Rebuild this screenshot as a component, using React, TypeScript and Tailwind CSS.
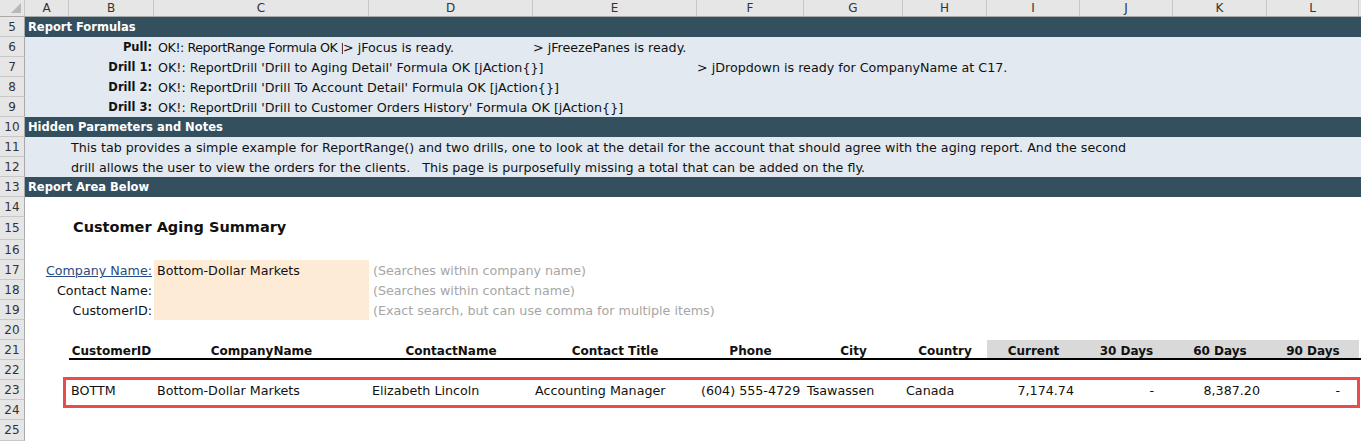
import type { ReactNode } from "react";

// column widths, A..L (row header is 25px)
const colA = "w-[44px]";
const colB = "w-[85px]";
const colC = "w-[215px]";
const colD = "w-[164px]";
const colE = "w-[164px]";
const colF = "w-[107px]";
const colG = "w-[99px]";
const colH = "w-[84px]";
const colI = "w-[93px]";
const colJ = "w-[93px]";
const colK = "w-[94px]";
const colL = "w-[92px]";

const letters: [string, string][] = [
  ["A", colA],
  ["B", colB],
  ["C", colC],
  ["D", colD],
  ["E", colE],
  ["F", colF],
  ["G", colG],
  ["H", colH],
  ["I", colI],
  ["J", colJ],
  ["K", colK],
  ["L", colL],
];

function Row({
  n,
  className = "",
  height = "h-5",
  children,
}: {
  n: number;
  className?: string;
  height?: string;
  children?: ReactNode;
}) {
  return (
    <div className={`flex ${height}`}>
      <div className="w-[25px] shrink-0 flex items-center justify-center bg-[#e6e6e6] border-b border-r border-b-[#c8c8c8] border-r-[#a9a9a9] text-[12px] text-[#333]">
        {n}
      </div>
      <div className={`flex flex-1 min-w-0 ${className}`}>{children}</div>
    </div>
  );
}

function Cell({ w, className = "", children }: { w: string; className?: string; children?: ReactNode }) {
  return <div className={`${w} shrink-0 flex items-center pt-[2px] whitespace-nowrap ${className}`}>{children}</div>;
}

function Band({ n, title }: { n: number; title: string }) {
  return (
    <Row n={n} className="bg-[#34505e] items-center pl-[3px] pt-[2px]">
      <span className="font-bold text-[11.5px] text-white">{title}</span>
    </Row>
  );
}

function DrillRow({ n, label, text }: { n: number; label: string; text: string }) {
  return (
    <Row n={n} className="bg-[#e2e9f0]">
      <Cell w={colA} />
      <Cell w={colB} className="justify-end pr-[2px] font-bold text-[11.5px]">
        {label}
      </Cell>
      <Cell w="w-auto" className="pl-[4px]">
        {text}
      </Cell>
    </Row>
  );
}

export default function App() {
  return (
    <div className="relative w-[1361px] h-[441px] overflow-hidden bg-white font-['DejaVu_Sans',sans-serif] text-[12.7px] text-[#111]">
      {/* column letters */}
      <div className="flex h-[17px] bg-[#e6e6e6] border-b border-[#a9a9a9]">
        <div className="w-[25px] shrink-0 relative border-r border-[#c8c8c8]">
          <div className="absolute right-[3px] bottom-[3px] w-0 h-0 border-r-[10px] border-t-[10px] border-r-[#b8b8b8] border-t-transparent" />
        </div>
        {letters.map(([l, w]) => (
          <div key={l} className={`${w} shrink-0 flex items-center justify-center border-r border-[#c8c8c8] text-[12px] text-[#333]`}>
            {l}
          </div>
        ))}
      </div>

      <Band n={5} title="Report Formulas" />

      <Row n={6} className="bg-[#e2e9f0]">
        <Cell w={colA} />
        <Cell w={colB} className="justify-end pr-[2px] font-bold text-[11.5px]">
          Pull:
        </Cell>
        <Cell w="w-[189px]" className="pl-[4px] overflow-hidden tracking-[-0.45px]">
          OK!: ReportRange Formula OK [jA
        </Cell>
        <Cell w="w-[190px]">&gt; jFocus is ready.</Cell>
        <Cell w="w-auto">&gt; jFreezePanes is ready.</Cell>
      </Row>
      <Row n={7} className="bg-[#e2e9f0]">
        <Cell w={colA} />
        <Cell w={colB} className="justify-end pr-[2px] font-bold text-[11.5px]">
          Drill 1:
        </Cell>
        <Cell w="w-[543px]" className="pl-[4px]">
          OK!: ReportDrill 'Drill to Aging Detail' Formula OK [jAction{"{}"}]
        </Cell>
        <Cell w="w-auto">&gt; jDropdown is ready for CompanyName at C17.</Cell>
      </Row>
      <DrillRow n={8} label="Drill 2:" text="OK!: ReportDrill 'Drill To Account Detail' Formula OK [jAction{}]" />
      <DrillRow n={9} label="Drill 3:" text="OK!: ReportDrill 'Drill to Customer Orders History' Formula OK [jAction{}]" />

      <Band n={10} title="Hidden Parameters and Notes" />

      <Row n={11} className="bg-[#e2e9f0]">
        <Cell w={colA} />
        <Cell w="w-auto" className="pl-[2px]">
          This tab provides a simple example for ReportRange() and two drills, one to look at the detail for the account that should agree with the aging report. And the second
        </Cell>
      </Row>
      <Row n={12} className="bg-[#e2e9f0]">
        <Cell w={colA} />
        <Cell w="w-auto" className="pl-[2px] whitespace-pre">
          drill allows the user to view the orders for the clients.   This page is purposefully missing a total that can be added on the fly.
        </Cell>
      </Row>

      <Band n={13} title="Report Area Below" />

      <Row n={14} />
      <Row n={15} height="h-[23px]">
        <Cell w={colA} />
        <Cell w="w-auto" className="pl-[4px] items-end pb-[1px] font-bold text-[14.5px]">
          Customer Aging Summary
        </Cell>
      </Row>
      <Row n={16} />

      {[
        { n: 17, label: "Company Name:", value: "Bottom-Dollar Markets", hint: "(Searches within company name)", link: true },
        { n: 18, label: "Contact Name:", value: "", hint: "(Searches within contact name)", link: false },
        { n: 19, label: "CustomerID:", value: "", hint: "(Exact search, but can use comma for multiple items)", link: false },
      ].map((r) => (
        <Row key={r.n} n={r.n}>
          <Cell w={colA} />
          <Cell w={colB} className="justify-end pr-[2px]">
            {r.link ? <span className="underline text-[#2b4a80] decoration-[#2b4a80]">{r.label}</span> : r.label}
          </Cell>
          <Cell w={colC} className="bg-[#fdebd6] pl-[3px]">
            {r.value}
          </Cell>
          <Cell w="w-auto" className="pl-[4px] text-[#a6a6a6]">
            {r.hint}
          </Cell>
        </Row>
      ))}

      <Row n={20} />

      <Row n={21} className="font-bold text-[12px]">
        <Cell w={colA} />
        {[
          ["CustomerID", colB, ""],
          ["CompanyName", colC, ""],
          ["ContactName", colD, ""],
          ["Contact Title", colE, ""],
          ["Phone", colF, ""],
          ["City", colG, ""],
          ["Country", colH, ""],
          ["Current", colI, "bg-[#d9d9d9]"],
          ["30 Days", colJ, "bg-[#d9d9d9]"],
          ["60 Days", colK, "bg-[#d9d9d9]"],
          ["90 Days", colL, "bg-[#d9d9d9]"],
        ].map(([t, w, bg]) => (
          <Cell key={t} w={w} className={`justify-center border-b-2 border-black pt-[4px] ${bg}`}>
            {t}
          </Cell>
        ))}
        <div className="flex-1 border-b-2 border-black" />
      </Row>

      <Row n={22} />
      <Row n={23}>
        <Cell w={colA} />
        <Cell w={colB} className="pl-[2px]">
          BOTTM
        </Cell>
        <Cell w={colC} className="pl-[3px]">
          Bottom-Dollar Markets
        </Cell>
        <Cell w={colD} className="pl-[3px]">
          Elizabeth Lincoln
        </Cell>
        <Cell w={colE} className="pl-[2px]">
          Accounting Manager
        </Cell>
        <Cell w={colF} className="pl-[4px]">
          (604) 555-4729
        </Cell>
        <Cell w={colG} className="pl-[3px]">
          Tsawassen
        </Cell>
        <Cell w={colH} className="pl-[3px]">
          Canada
        </Cell>
        <Cell w={colI} className="justify-end pr-[6px]">
          7,174.74
        </Cell>
        <Cell w={colJ} className="justify-end pr-[19px]">
          -
        </Cell>
        <Cell w={colK} className="justify-end pr-[7px]">
          8,387.20
        </Cell>
        <Cell w={colL} className="justify-end pr-[19px]">
          -
        </Cell>
      </Row>
      <Row n={24} />
      <Row n={25} height="h-[21px]" />

      {/* highlight box drawn over row 23 */}
      <div className="absolute left-[63px] top-[377px] w-[1297px] h-[31px] border-[3px] border-[#e84c4c] pointer-events-none" />
    </div>
  );
}
